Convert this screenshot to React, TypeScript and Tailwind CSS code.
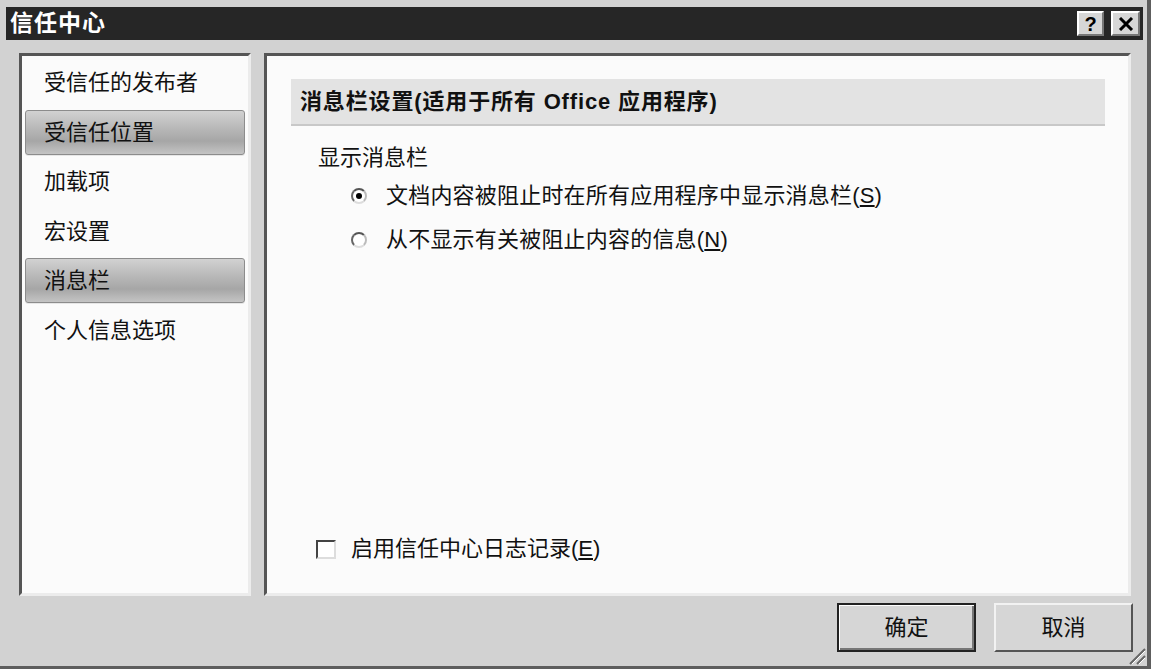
import React from 'react';

const font = 'font-["Liberation_Sans","Noto_Sans_CJK_SC",sans-serif]';

const navItems = ['受信任的发布者', '受信任位置', '加载项', '宏设置', '消息栏', '个人信息选项'];
const selected = ['受信任位置', '消息栏'];

function Radio({ checked }: { checked?: boolean }) {
    return (
        <span className="flex h-[16px] w-[16px] items-center justify-center rounded-full border-2 border-t-[#555] border-l-[#666] border-r-[#bbb] border-b-[#ddd] bg-white">
            {checked && <span className="h-[6px] w-[6px] rounded-full bg-black" />}
        </span>
    );
}

export default function App() {
    return (
        <div className={`${font} relative flex h-[669px] w-[1151px] flex-col border-r-4 border-b-[3px] border-[#5e5e5e] bg-[#d2d2d2] pt-[7px] pl-[6px] pr-[4px] text-[#111]`}>
            {/* title bar */}
            <div className="flex h-[33px] items-center justify-between bg-[#262626] pl-[4px] pr-[3px]">
                <span className="text-[23px] font-bold tracking-[1px] text-white">信任中心</span>
                <div className="flex gap-[7px]">
                    <button className="flex h-[25px] w-[27px] items-center justify-center border-2 border-t-white border-l-white border-r-[#777] border-b-[#777] bg-[#d6d6d6] text-[20px] font-bold leading-none text-black">?</button>
                    <button className="flex h-[25px] w-[29px] items-center justify-center border-2 border-t-white border-l-white border-r-[#777] border-b-[#777] bg-[#d6d6d6]">
                        <svg width="16" height="14" viewBox="0 0 16 14">
                            <path d="M2 1 L14 13 M14 1 L2 13" stroke="#000" strokeWidth="3" />
                        </svg>
                    </button>
                </div>
            </div>

            {/* panels */}
            <div className="mt-[13px] ml-[13px] flex h-[543px] gap-[13px]">
                <div className="flex w-[232px] flex-col gap-[4.6px] border-[3px] border-t-[#555] border-l-[#555] border-r-[#ececec] border-b-[#ececec] bg-[#fbfbfb] px-[3px] pt-[4px]">
                    {navItems.map((item) => {
                        const on = selected.includes(item);
                        return (
                            <div
                                key={item}
                                className={
                                    on
                                        ? 'flex h-[45px] items-center rounded-[3px] border border-[#8c8c8c] bg-[linear-gradient(#d2d2d2,#b8b8b8_40%,#a6a6a6_70%,#c4c4c4)] pl-[18px] text-[22px] shadow-[0_1px_0_#e6e6e6]'
                                        : 'flex h-[45px] items-center pl-[19px] text-[22px]'
                                }
                            >
                                {item}
                            </div>
                        );
                    })}
                </div>

                <div className="flex w-[867px] flex-col border-[3px] border-t-[#555] border-l-[#555] border-r-[#ececec] border-b-[#ececec] bg-[#fbfbfb] pt-[23px] pl-[24px] pr-[23px]">
                    <div className="flex h-[47px] items-center border-b-2 border-[#c8c8c8] bg-[#e3e3e3] pl-[9px] text-[22px] font-bold tracking-[0.85px]">
                        消息栏设置(适用于所有 Office 应用程序)
                    </div>
                    <div className="mt-[18px] pl-[27px] text-[22px] leading-[28px]">显示消息栏</div>
                    <div className="mt-[10px] flex flex-col gap-[16px] pl-[60px] text-[22px] leading-[28px]">
                        <label className="flex items-center gap-[19px]">
                            <Radio checked />
                            <span className="tracking-[0.2px]">
                                文档内容被阻止时在所有应用程序中显示消息栏(<span className="underline">S</span>)
                            </span>
                        </label>
                        <label className="flex items-center gap-[19px]">
                            <Radio />
                            <span className="tracking-[0.2px]">
                                从不显示有关被阻止内容的信息(<span className="underline">N</span>)
                            </span>
                        </label>
                    </div>
                    <div className="flex-1" />
                    <label className="mb-[30px] flex items-center gap-[15px] pl-[25px] text-[22px] leading-[28px]">
                        <span className="h-[19px] w-[20px] border-2 border-t-[#444] border-l-[#444] border-r-[#ddd] border-b-[#ddd] bg-white" />
                        <span>
                            启用信任中心日志记录(<span className="underline">E</span>)
                        </span>
                    </label>
                </div>
            </div>

            {/* footer buttons */}
            <div className="mt-[7px] mr-[10px] flex justify-end gap-[18px]">
                <button className="flex h-[49px] w-[139px] items-center justify-center border-2 border-[#222] bg-[#d6d6d6] text-[22px] shadow-[inset_1px_1px_0_#fff,inset_-2px_-2px_0_#777]">
                    确定
                </button>
                <button className="flex h-[49px] w-[139px] items-center justify-center border-2 border-t-[#f2f2f2] border-l-[#f2f2f2] border-r-[#555] border-b-[#555] bg-[#d6d6d6] text-[22px]">
                    取消
                </button>
            </div>

            {/* resize grip */}
            <svg className="absolute right-[1px] bottom-[1px]" width="22" height="22" viewBox="0 0 22 22">
                <path d="M21 6 L6 21 M21 13 L13 21" stroke="#666" strokeWidth="2" />
                <path d="M21 8 L8 21 M21 15 L15 21" stroke="#fff" strokeWidth="1" />
            </svg>
        </div>
    );
}
